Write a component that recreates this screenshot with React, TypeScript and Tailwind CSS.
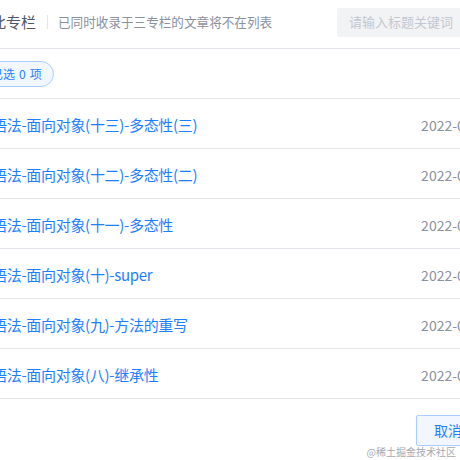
const posts = [
  { title: "语法-面向对象(十三)-多态性(三)", date: "2022-03-12" },
  { title: "语法-面向对象(十二)-多态性(二)", date: "2022-03-11" },
  { title: "语法-面向对象(十一)-多态性", date: "2022-03-10" },
  { title: "语法-面向对象(十)-super", date: "2022-03-09" },
  { title: "语法-面向对象(九)-方法的重写", date: "2022-03-08" },
  { title: "语法-面向对象(八)-继承性", date: "2022-03-07" },
];

export default function App() {
  return (
    <div className="relative h-[460px] w-[460px] overflow-hidden bg-white font-['Noto_Sans_CJK_SC',sans-serif]">
      <div className="flex h-[49px] items-center border-b border-[#e4e6eb] pb-[4px]">
        <span className="-ml-[9px] shrink-0 text-[15px] text-[#515767]">此专栏</span>
        <span className="ml-[11px] mr-[10px] h-[14px] w-px shrink-0 bg-[#e4e6eb]" />
        <span className="shrink-0 text-[12.6px] text-[#8a919f]">
          已同时收录于三专栏的文章将不在列表
        </span>
        <div className="ml-auto flex h-[29px] w-[160px] shrink-0 translate-x-[37px] items-center rounded-[2px] bg-[#f2f3f5] pl-[12px] text-[13px] text-[#c2c8d1]">
          请输入标题关键词
        </div>
      </div>

      <div className="flex h-[50px] items-center border-b border-[#e4e6eb] pt-[1px]">
        <span className="-ml-[21px] flex items-center rounded-full border border-[#abcdff] bg-[#f2f7ff] px-[11px] py-[3px] text-[12px] text-[#1e80ff]">
          已选<span className="mx-[4px]">0</span>项
        </span>
      </div>

      {posts.map((p) => (
        <div
          key={p.title}
          className="flex h-[50px] items-center border-b border-[#e4e6eb] pt-[3px]"
        >
          <span className="-ml-[8px] text-[15px] tracking-[-0.3px] text-[#1e80ff]">
            {p.title}
          </span>
          <span className="ml-auto shrink-0 translate-x-[33px] text-[14px] text-[#8a919f]">
            {p.date}
          </span>
        </div>
      ))}

      <div className="flex justify-end pt-[16px]">
        <button className="-mr-[20px] h-[31px] rounded-[2px] border border-[#abcdff] bg-[#f2f7ff] px-[17px] text-[14px] text-[#1e80ff]">
          取消
        </button>
      </div>

      <span className="absolute bottom-[1px] right-[4px] text-[10px] text-[#a4a9b3]">
        @稀土掘金技术社区
      </span>
    </div>
  );
}
